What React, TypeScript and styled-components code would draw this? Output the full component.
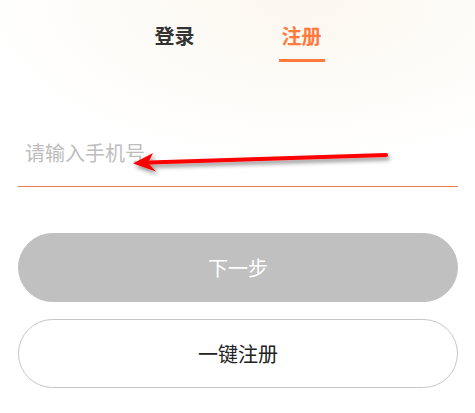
import React, { useState } from 'react';
import styled, { createGlobalStyle } from 'styled-components';

const GlobalStyle = createGlobalStyle`
  html, body {
    margin: 0;
    padding: 0;
    background: #ffffff;
  }
  * {
    box-sizing: border-box;
  }
  body {
    font-family: "Noto Sans", "Noto Sans CJK SC", sans-serif;
  }
`;

const Page = styled.div`
  position: relative;
  width: 475px;
  min-height: 413px;
  padding: 22px 17px 0 18px;
  display: flex;
  flex-direction: column;
  background: radial-gradient(ellipse 320px 160px at 300px 0px, #fcf7ef 0%, #fdfbf7 50%, #ffffff 100%);
  overflow: hidden;
`;

const Tabs = styled.nav`
  display: flex;
  justify-content: center;
  gap: 81px;
`;

const Tab = styled.button<{ $active?: boolean }>`
  display: flex;
  flex-direction: column;
  align-items: center;
  gap: 9px;
  padding: 0;
  border: none;
  background: none;
  cursor: pointer;
  font-family: "Noto Sans CJK SC", sans-serif;
  font-size: 20px;
  line-height: 28px;
  font-weight: 700;
  color: ${({ $active }) => ($active ? '#ff7a3c' : '#333333')};
`;

const Indicator = styled.span<{ $active?: boolean }>`
  display: block;
  width: 46px;
  height: 3px;
  background: ${({ $active }) => ($active ? '#ff7a3c' : 'transparent')};
`;

const Field = styled.label`
  display: flex;
  align-items: center;
  height: 68px;
  margin-top: 57px;
  padding-left: 5px;
  border-bottom: 1px solid #ec7c4e;
`;

const PhoneInput = styled.input`
  flex: 1;
  border: none;
  outline: none;
  background: transparent;
  font-family: "Noto Sans CJK SC", sans-serif;
  font-size: 20px;
  color: #333333;

  &::placeholder {
    color: #bdbdbd;
  }
`;

const Actions = styled.div`
  display: flex;
  flex-direction: column;
  gap: 17px;
  margin-top: 46px;
`;

const PillButton = styled.button<{ $variant: 'filled' | 'outline' }>`
  height: 69px;
  width: 100%;
  border-radius: 35px;
  font-family: "Noto Sans CJK SC", sans-serif;
  font-size: 20px;
  cursor: pointer;
  border: 1px solid ${({ $variant }) => ($variant === 'filled' ? '#c0c0c0' : '#c6c6c6')};
  background: ${({ $variant }) => ($variant === 'filled' ? '#c0c0c0' : '#ffffff')};
  color: ${({ $variant }) => ($variant === 'filled' ? '#ffffff' : '#222222')};
`;

const Annotation = styled.svg`
  position: absolute;
  left: 0;
  top: 0;
  width: 475px;
  height: 413px;
  pointer-events: none;
`;

export default function App() {
  const [tab, setTab] = useState<'login' | 'register'>('register');
  const [phone, setPhone] = useState('');

  return (
    <>
      <GlobalStyle />
      <Page>
        <Tabs>
          <Tab $active={tab === 'login'} onClick={() => setTab('login')}>
            登录
            <Indicator $active={tab === 'login'} />
          </Tab>
          <Tab $active={tab === 'register'} onClick={() => setTab('register')}>
            注册
            <Indicator $active={tab === 'register'} />
          </Tab>
        </Tabs>

        <Field>
          <PhoneInput
            type="tel"
            placeholder="请输入手机号"
            value={phone}
            onChange={(e) => setPhone(e.target.value)}
          />
        </Field>

        <Actions>
          <PillButton $variant="filled">下一步</PillButton>
          <PillButton $variant="outline">一键注册</PillButton>
        </Actions>

        {/* red arrow drawn over the screenshot */}
        <Annotation viewBox="0 0 475 413">
          <defs>
            <filter id="arrowShadow" x="-10%" y="-50%" width="120%" height="200%">
              <feDropShadow dx="2" dy="3" stdDeviation="2" floodColor="#000" floodOpacity="0.45" />
            </filter>
          </defs>
          <g filter="url(#arrowShadow)">
            <line x1="386" y1="155" x2="150" y2="162.5" stroke="#ff0000" strokeWidth="4" strokeLinecap="round" />
            <polygon points="133,163.5 153,153 148,163 156,171.5" fill="#ff0000" />
          </g>
        </Annotation>
      </Page>
    </>
  );
}
